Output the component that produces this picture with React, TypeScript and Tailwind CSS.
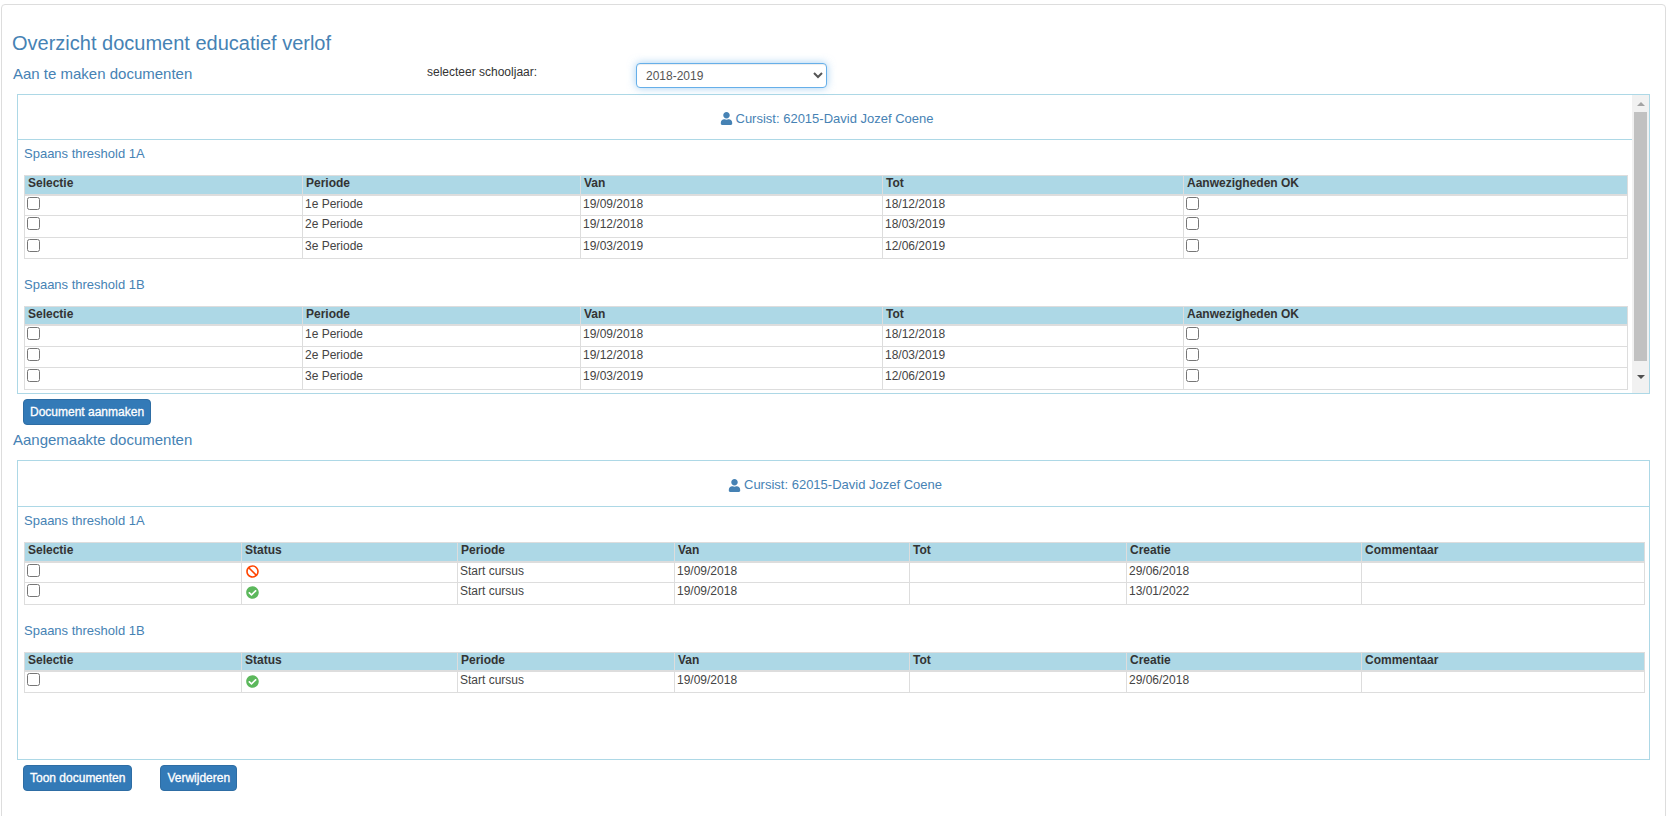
import React from 'react'
import { FaBan, FaCheckCircle, FaUser } from 'react-icons/fa'

type Cell = string | 'check' | 'ban' | 'ok'

type TableProps = {
  title: string
  cols: { label: string; width: string }[]
  rows: Cell[][]
  className?: string
}

const cols1 = [
  { label: 'Selectie', width: 'w-[278px]' },
  { label: 'Periode', width: 'w-[278px]' },
  { label: 'Van', width: 'w-[302px]' },
  { label: 'Tot', width: 'w-[301px]' },
  { label: 'Aanwezigheden OK', width: '' },
]

const cols2 = [
  { label: 'Selectie', width: 'w-[217px]' },
  { label: 'Status', width: 'w-[216px]' },
  { label: 'Periode', width: 'w-[217px]' },
  { label: 'Van', width: 'w-[235px]' },
  { label: 'Tot', width: 'w-[217px]' },
  { label: 'Creatie', width: 'w-[235px]' },
  { label: 'Commentaar', width: '' },
]

const rows1: Cell[][] = [
  ['check', '1e Periode', '19/09/2018', '18/12/2018', 'check'],
  ['check', '2e Periode', '19/12/2018', '18/03/2019', 'check'],
  ['check', '3e Periode', '19/03/2019', '12/06/2019', 'check'],
]

function CellContent({ cell }: { cell: Cell }) {
  if (cell === 'check') {
    return <input type="checkbox" className="block m-0 ml-[2px] mt-[1px] w-[13px] h-[13px]" />
  }
  if (cell === 'ban') return <FaBan className="ml-[4px] mt-[2px] text-[13px] text-[#ff4500]" />
  if (cell === 'ok') return <FaCheckCircle className="ml-[4px] mt-[3px] text-[13px] text-[#5cb85c]" />
  return <span className="block pl-[2px] pt-px pb-[2px]">{cell}</span>
}

function DocTable({ title, cols, rows, className }: TableProps) {
  return (
    <div className={className}>
      <div className="h-[29px] text-[13px] leading-[16px] text-[#4682b4]">{title}</div>
      <table className="w-full table-fixed border-collapse text-[12px] leading-[14px] text-[#444]">
        <colgroup>
          {cols.map((c) => (
            <col key={c.label} className={c.width} />
          ))}
        </colgroup>
        <thead>
          <tr className="h-[19px] bg-[#add8e6]">
            {cols.map((c) => (
              <th key={c.label} className="border border-b-2 border-[#ddd] px-[3px] p-0 text-left align-top font-bold text-[#333]">
                {c.label}
              </th>
            ))}
          </tr>
        </thead>
        <tbody>
          {rows.map((row, i) => (
            <tr key={i}>
              {row.map((cell, j) => (
                <td key={j} className="h-[21.3px] border border-[#ddd] p-0 align-top">
                  <CellContent cell={cell} />
                </td>
              ))}
            </tr>
          ))}
        </tbody>
      </table>
    </div>
  )
}

function PanelHeader({ height }: { height: string }) {
  return (
    <div className={`flex ${height} items-center justify-center gap-[3px] border-b border-[#add8e6] pl-[3px] pt-[3px] text-[13px] text-[#4682b4]`}>
      <FaUser className="text-[13px]" />
      <span>Cursist: 62015-David Jozef Coene</span>
    </div>
  )
}

function Btn({ children }: { children: React.ReactNode }) {
  return (
    <button className="h-[26px] rounded border border-[#2e6da4] bg-[#337ab7] px-[6px] text-[12px] font-normal text-white [-webkit-text-stroke:0.3px_white]">
      {children}
    </button>
  )
}

export default function App() {
  return (
    <div className="h-screen overflow-hidden bg-white pt-[4px] pl-px pr-px font-['Liberation_Sans',Arial,sans-serif]">
      <div className="h-[900px] w-[1665px] rounded-t border border-[#ddd] pl-[11px] pr-[15px] pt-[24px]">
        <h3 className="ml-[-1px] text-[20px] leading-[28px] text-[#4682b4]">Overzicht document educatief verlof</h3>

        <div className="flex h-[34px] items-center">
          <div className="w-[414px] text-[15px] text-[#4682b4]">Aan te maken documenten</div>
          <div className="w-[209px] pb-[4px] text-[12px] text-[#333]">selecteer schooljaar:</div>
          <select className="mt-[3px] h-[25px] w-[191px] rounded border border-[#66afe9] bg-white pl-[5px] text-[12px] text-[#555] shadow-[inset_0_1px_1px_rgba(0,0,0,.075),0_0_8px_rgba(102,175,233,.6)]">
            <option>2018-2019</option>
          </select>
        </div>

        <div className="ml-[4px] mt-[3px] flex h-[300px] border border-[#add8e6]">
          <div className="flex-1 overflow-hidden">
            <PanelHeader height="h-[45px]" />
            <div className="pl-[6px] pr-[4px] pt-[6px]">
              <DocTable title="Spaans threshold 1A" cols={cols1} rows={rows1} />
              <DocTable title="Spaans threshold 1B" cols={cols1} rows={rows1} className="mt-[18px]" />
            </div>
          </div>
          <div className="flex w-[17px] flex-col items-center bg-[#f1f1f1]">
            <div className="flex h-[17px] items-center justify-center">
              <svg width="8" height="4" viewBox="0 0 8 4"><path d="M4 0L8 4H0z" fill="#a3a3a3" /></svg>
            </div>
            <div className="h-[249px] w-[13px] bg-[#c1c1c1]" />
            <div className="flex flex-1 items-center justify-center">
              <svg width="8" height="4" viewBox="0 0 8 4"><path d="M0 0H8L4 4z" fill="#505050" /></svg>
            </div>
          </div>
        </div>

        <div className="ml-[10px] mt-[5px]">
          <Btn>Document aanmaken</Btn>
        </div>

        <div className="mt-[6px] h-[29px] text-[15px] leading-[18px] text-[#4682b4]">Aangemaakte documenten</div>

        <div className="ml-[4px] h-[300px] border border-[#add8e6]">
          <PanelHeader height="h-[46px]" />
          <div className="pl-[6px] pr-[4px] pt-[6px]">
            <DocTable
              title="Spaans threshold 1A"
              cols={cols2}
              rows={[
                ['check', 'ban', 'Start cursus', '19/09/2018', '', '29/06/2018', ''],
                ['check', 'ok', 'Start cursus', '19/09/2018', '', '13/01/2022', ''],
              ]}
            />
            <DocTable
              title="Spaans threshold 1B"
              cols={cols2}
              rows={[['check', 'ok', 'Start cursus', '19/09/2018', '', '29/06/2018', '']]}
              className="mt-[18px]"
            />
          </div>
        </div>

        <div className="ml-[10px] mt-[5px] flex gap-[28px]">
          <Btn>Toon documenten</Btn>
          <Btn>Verwijderen</Btn>
        </div>
      </div>
    </div>
  )
}
